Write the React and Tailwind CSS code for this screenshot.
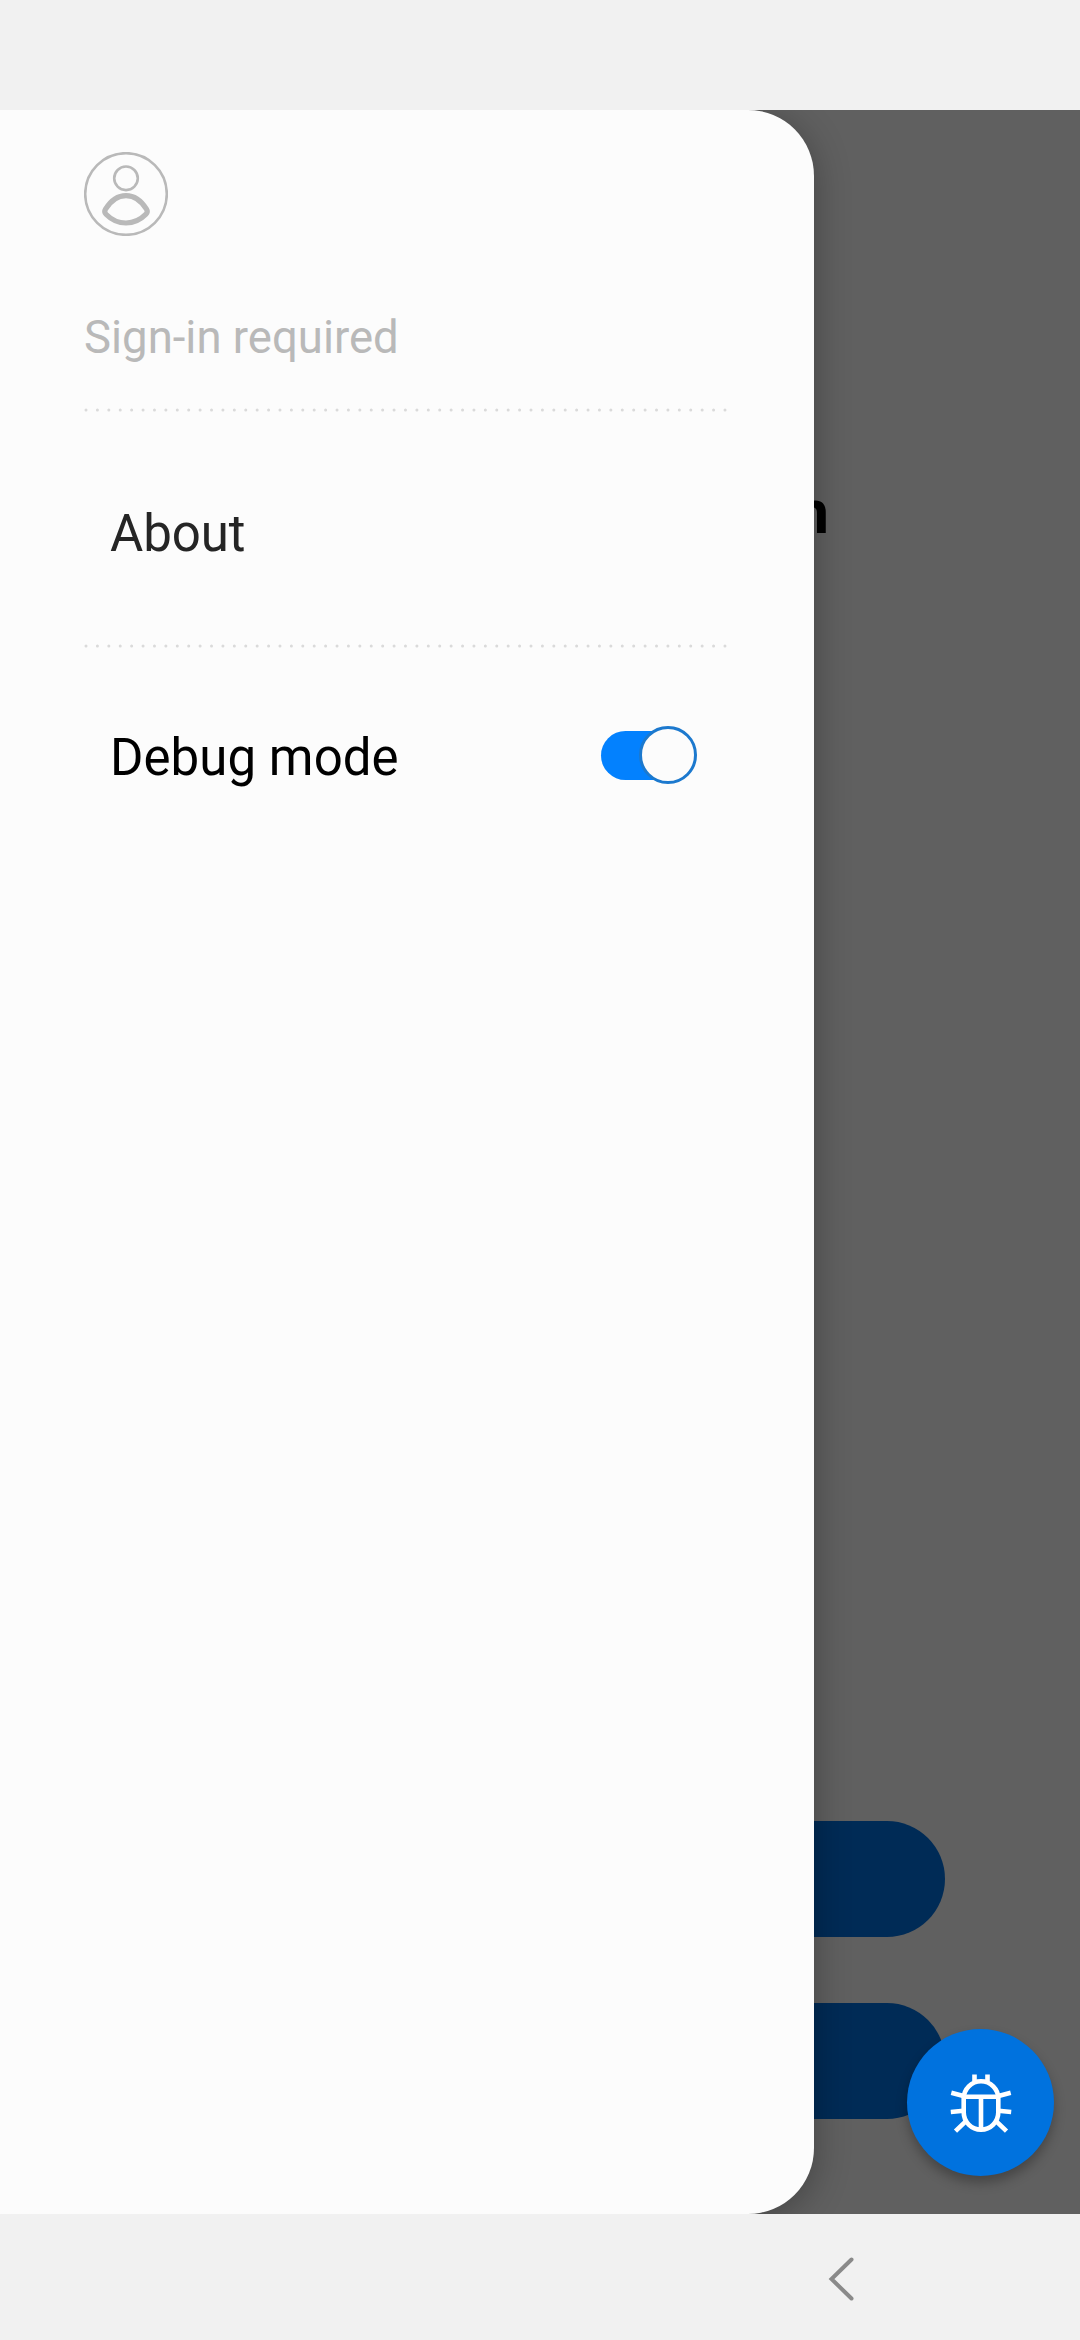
function AvatarIcon() {
  return (
    <svg className="block size-[84px]" viewBox="0 0 84 84" fill="none" stroke="#b9b9b9">
      <circle cx="42" cy="42" r="40.8" strokeWidth="2.6" />
      <circle cx="42" cy="26.3" r="11.8" strokeWidth="2.6" />
      <path
        d="M42 43.6C51.5 43.6 57.5 49 62.5 57.2C63.6 59 63.6 60.6 62 62.2C56.5 67.8 50 71 42 71C34 71 27.5 67.8 22 62.2C20.4 60.6 20.4 59 21.5 57.2C26.5 49 32.5 43.6 42 43.6Z"
        strokeWidth="5.2"
      />
    </svg>
  );
}

function BugIcon() {
  return (
    <svg className="block size-[62px]" viewBox="0 0 62 62" fill="none" stroke="#fff" strokeWidth="4.6">
      <rect x="13.7" y="9.2" width="34.6" height="48.4" rx="17.3" />
      <path d="M13.7 24.8H48.3M31 24.8V57.5" />
      <path d="M24.5 2.5V9.5M37.5 2.5V9.5" />
      <path d="M1.3 20.8L13.5 24M60.7 20.8L48.5 24" />
      <path d="M0.8 40L13.5 38.8M61.2 40L48.5 38.8" />
      <path d="M5.5 59.2L17 48.2M56.5 59.2L45 48.2" />
    </svg>
  );
}

function Divider() {
  return (
    <svg className="block h-[4px] w-[644px]" viewBox="0 0 644 4">
      <path d="M2 2H642" stroke="#dadada" strokeWidth="3" strokeLinecap="round" strokeDasharray="0.01 11.4" />
    </svg>
  );
}

function Toggle() {
  return (
    <div className="flex h-[58px] w-[96px] items-center">
      <div className="flex h-[49px] w-[96px] items-center justify-end rounded-full bg-gradient-to-r from-[#0381fe] from-80% to-transparent to-80%">
        <div className="size-[58px] shrink-0 rounded-full border-3 border-[#1c79ce] bg-[#fcfcfc]" />
      </div>
    </div>
  );
}

function Drawer() {
  return (
    <aside className="absolute inset-y-0 left-0 w-[814px] rounded-r-[66px] bg-[#fcfcfc] pt-[42px] pl-[84px] shadow-[0_6px_36px_rgba(0,0,0,0.3)]">
      <AvatarIcon />
      <p className="mt-[72px] h-[60px] text-[45.5px] leading-[60px] whitespace-nowrap text-[#b9b9b9]">Sign-in required</p>
      <div className="mt-[40px]">
        <Divider />
      </div>
      <div className="flex h-[232px] items-center pt-[12px] pl-[26px] text-[51px] leading-[60px] tracking-[-0.1px] text-[#252525]">
        About
      </div>
      <Divider />
      <div className="mt-[77px] flex h-[60px] w-[613px] items-center justify-between pl-[26px] text-[51px] leading-[60px] tracking-[0.05px] text-black">
        <span className="pt-[5px]">Debug mode</span>
        <Toggle />
      </div>
    </aside>
  );
}

export default function App() {
  return (
    <div className="flex h-[2340px] w-[1080px] flex-col bg-[#f1f1f1] font-['Roboto',sans-serif]">
      <header className="h-[110px] shrink-0" />
      <main className="relative flex h-[2104px] shrink-0 flex-col overflow-hidden bg-[#606060]">
        <h1 className="mt-[365px] mr-[251px] text-right text-[62px] leading-[74px] font-bold text-black">n</h1>
        <div className="mx-[135px] mt-auto mb-[95px] flex flex-col gap-[66px]">
          <div className="h-[116px] rounded-full bg-[#002b56]" />
          <div className="h-[116px] rounded-full bg-[#002b56]" />
        </div>
        <Drawer />
        <button className="absolute top-[1919px] left-[907px] flex size-[147px] items-center justify-center rounded-full bg-[#0072de] shadow-[0_7px_12px_rgba(0,0,0,0.28)]">
          <BugIcon />
        </button>
      </main>
      <nav className="flex h-[126px] shrink-0 items-center pl-[828px]">
        <svg className="block h-[48px] w-[28px]" viewBox="0 0 28 48" fill="none" stroke="#8a8a8a" strokeWidth="4">
          <path d="M23.5 6.5L3.5 26L23.5 45.5" strokeLinecap="round" />
        </svg>
      </nav>
    </div>
  );
}
